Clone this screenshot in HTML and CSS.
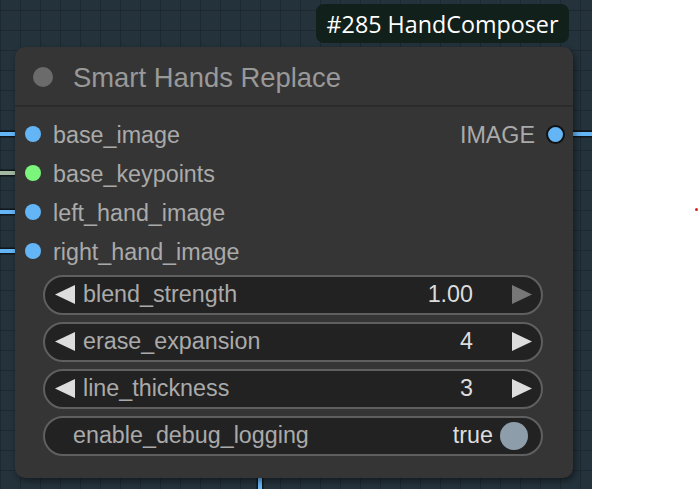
FILE: index.html
```html
<!DOCTYPE html>
<html>
<head>
<meta charset="utf-8">
<link rel="stylesheet" href="styles.css">
</head>
<body>
<div class="page">
  <div class="canvas">
    <div class="link link-in blue r1"></div>
    <div class="link link-in green r2"></div>
    <div class="link link-in blue r3"></div>
    <div class="link link-in blue r4"></div>
    <div class="link link-out blue r1"></div>
    <div class="link link-down blue"></div>

    <div class="badge">#285 HandComposer</div>

    <div class="node">
      <div class="title">
        <span class="title-dot"></span>
        <span class="title-text">Smart Hands Replace</span>
      </div>
      <div class="slots">
        <div class="slot-row">
          <div class="slot-in"><span class="dot blue"></span><span class="slot-label">base_image</span></div>
          <div class="slot-out"><span class="slot-label">IMAGE</span><span class="dot blue outlined"></span></div>
        </div>
        <div class="slot-row">
          <div class="slot-in"><span class="dot green"></span><span class="slot-label">base_keypoints</span></div>
        </div>
        <div class="slot-row">
          <div class="slot-in"><span class="dot blue"></span><span class="slot-label">left_hand_image</span></div>
        </div>
        <div class="slot-row">
          <div class="slot-in"><span class="dot blue"></span><span class="slot-label">right_hand_image</span></div>
        </div>
      </div>
      <div class="widgets">
        <div class="pill num">
          <svg class="arr" width="20" height="19" viewBox="0 0 20 19"><polygon points="20,0 0,9.5 20,19"/></svg>
          <span class="wlabel">blend_strength</span>
          <span class="wval">1.00</span>
          <svg class="arr dim" width="20" height="19" viewBox="0 0 20 19"><polygon points="0,0 20,9.5 0,19"/></svg>
        </div>
        <div class="pill num">
          <svg class="arr" width="20" height="19" viewBox="0 0 20 19"><polygon points="20,0 0,9.5 20,19"/></svg>
          <span class="wlabel">erase_expansion</span>
          <span class="wval">4</span>
          <svg class="arr" width="20" height="19" viewBox="0 0 20 19"><polygon points="0,0 20,9.5 0,19"/></svg>
        </div>
        <div class="pill num">
          <svg class="arr" width="20" height="19" viewBox="0 0 20 19"><polygon points="20,0 0,9.5 20,19"/></svg>
          <span class="wlabel">line_thickness</span>
          <span class="wval">3</span>
          <svg class="arr" width="20" height="19" viewBox="0 0 20 19"><polygon points="0,0 20,9.5 0,19"/></svg>
        </div>
        <div class="pill toggle">
          <span class="wlabel">enable_debug_logging</span>
          <span class="wval">true</span>
          <span class="knob"></span>
        </div>
      </div>
    </div>
  </div>
  <div class="blank"><span class="red-dot"></span></div>
</div>
</body>
</html>
```

FILE: styles.css
```css
* { box-sizing: border-box; }
html, body { margin: 0; padding: 0; background: #fff; }
body { width: 700px; height: 489px; overflow: hidden; font-family: "Liberation Sans", Arial, sans-serif; }

.page { display: flex; width: 700px; height: 489px; }

.canvas {
  position: relative;
  width: 592px;
  height: 489px;
  flex: none;
  background-color: #24323b;
  background-image:
    linear-gradient(to right, #1d2931 1px, transparent 1px),
    linear-gradient(to bottom, #1d2931 1px, transparent 1px);
  background-size: 20px 20px;
  background-position: 0 10px;
  overflow: hidden;
}

.blank { position: relative; flex: 1; background: #fff; }
.red-dot { position: absolute; left: 103px; top: 208px; width: 3px; height: 3px; background: #e02020; border-radius: 50%; }

/* links */
.link { position: absolute; box-shadow: 0 0 0 1.5px rgba(10, 14, 18, 0.75); }
.link.blue { background: #64b5f6; }
.link.green { background: #a3b8a3; }
.link-in { left: -4px; width: 24px; height: 4px; }
.link-in.r1 { top: 132px; }
.link-in.r2 { top: 171px; }
.link-in.r3 { top: 210px; }
.link-in.r4 { top: 249px; }
.link-out { left: 560px; width: 40px; height: 4px; top: 132px; }
.link-down { left: 258px; top: 470px; width: 4px; height: 30px; }

/* badge */
.badge {
  position: absolute;
  left: 316px;
  top: 4px;
  width: 253px;
  height: 39px;
  border-radius: 8px;
  background: #11201a;
  color: #fff;
  font-family: "Open Sans", "Noto Sans", sans-serif;
  font-size: 23.3px;
  display: flex;
  align-items: center;
  justify-content: center;
  padding-top: 1px;
  z-index: 3;
}

/* node */
.node {
  position: absolute;
  left: 15px;
  top: 47px;
  width: 558px;
  height: 431px;
  background: #353535;
  border-radius: 10px;
  box-shadow: 2px 3px 6px rgba(0, 0, 0, 0.45);
  display: flex;
  flex-direction: column;
  z-index: 2;
}

.title {
  height: 60px;
  border-bottom: 2px solid #2b2b2b;
  display: flex;
  align-items: center;
  padding-left: 18px;
  padding-top: 2px;
  gap: 20px;
}
.title-dot { width: 20px; height: 20px; border-radius: 50%; background: #6b6b6b; flex: none; }
.title-text { color: #999; font-size: 27.4px; padding-top: 1px; }

.slots { padding-top: 8px; display: flex; flex-direction: column; }
.slot-row { height: 39px; display: flex; align-items: center; justify-content: space-between; }
.slot-in { display: flex; align-items: center; gap: 12px; padding-left: 10px; }
.slot-out { display: flex; align-items: center; gap: 11px; padding-right: 8px; }
.slot-label { color: #aaa; font-size: 23.3px; line-height: 1; padding-top: 3px; }
.dot { width: 16px; height: 16px; border-radius: 50%; flex: none; }
.dot.blue { background: #64b5f6; }
.dot.green { background: #7cf57c; }
.dot.outlined { width: 19px; height: 19px; border: 2px solid #111; }

.widgets {
  padding: 3.5px 30px 22.5px 28px;
  display: flex;
  flex-direction: column;
  gap: 7px;
}
.pill {
  height: 40px;
  border: 2px solid #5f5f5f;
  border-radius: 20px;
  background: #222;
  display: flex;
  align-items: center;
  font-size: 23.3px;
}
.pill.num { padding: 0 9px 0 10px; }
.pill.toggle { padding: 0 13px 0 28px; }
.arr { flex: none; fill: #ddd; }
.arr.dim { fill: #777; }
.wlabel { color: #aaa; flex: 1; margin-left: 8px; }
.pill.toggle .wlabel { margin-left: 0; }
.wval { color: #ddd; }
.pill.num .wval { margin-right: 39px; }
.knob { width: 28px; height: 28px; border-radius: 50%; background: #8d9daa; margin-left: 7px; flex: none; }
```
